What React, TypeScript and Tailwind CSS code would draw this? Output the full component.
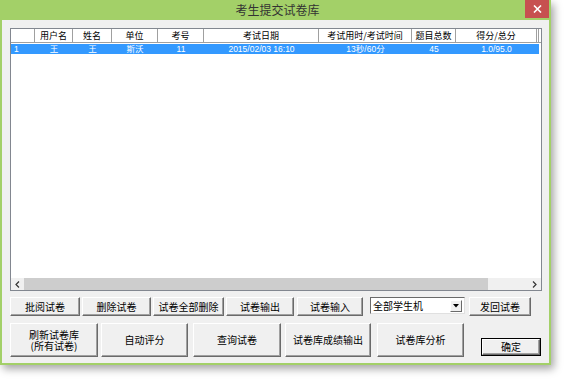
import React from "react";

const F = { fontFamily: '"Noto Sans CJK SC", "Liberation Sans", sans-serif' };
const FV = { fontFamily: '"Liberation Sans", "Noto Sans CJK SC", sans-serif' };

const cols: { w: number; label: string; val: string; align?: string }[] = [
  { w: 24, label: "", val: "1", align: "left" },
  { w: 38, label: "用户名", val: "王" },
  { w: 39, label: "姓名", val: "王" },
  { w: 46, label: "单位", val: "斯沃" },
  { w: 46, label: "考号", val: "11" },
  { w: 115, label: "考试日期", val: "2015/02/03 16:10" },
  { w: 93, label: "考试用时/考试时间", val: "13秒/60分" },
  { w: 44, label: "题目总数", val: "45" },
  { w: 81, label: "得分/总分", val: "1.0/95.0" },
];

function Btn({ className, children }: { className: string; children: React.ReactNode }) {
  return (
    <div
      className={
        "flex items-center justify-center bg-[#f0f0f0] border border-t-white border-l-white border-r-[#6a6a6a] border-b-[#6a6a6a] shadow-[inset_-1px_-1px_0_#a0a0a0] text-[10px] leading-[12px] text-black text-center whitespace-nowrap " +
        className
      }
    >
      {children}
    </div>
  );
}

export default function App() {
  return (
    <div className="w-[568px] h-[382px] bg-white overflow-hidden" style={F}>
      <div className="w-[551px] h-[365px] bg-[#a3d068] flex flex-col px-[2px] pb-[2px] shadow-[3px_4px_8px_rgba(0,0,0,0.35)]">
        <div className="h-[20px] relative flex items-center justify-center shrink-0">
          <span className="text-[12px] text-[#333] ml-[4px]">考生提交试卷库</span>
          <div className="absolute right-[0px] top-0 w-[24px] h-[18px] bg-[#c75050] flex items-center justify-center">
            <svg width="9" height="8" viewBox="0 0 9 8">
              <path d="M1 0.5 L8 7.5 M8 0.5 L1 7.5" stroke="white" strokeWidth="1.6" />
            </svg>
          </div>
        </div>
        <div className="flex-1 bg-[#f0f0f0] pl-[8px] pt-[8px] flex flex-col">
          {/* list view */}
          <div className="w-[532px] h-[263px] border border-[#828790] bg-white flex flex-col">
            <div className="h-[14px] flex border-b border-[#a0a0a0] shrink-0">
              {cols.map((c, i) => (
                <div
                  key={i}
                  style={{ width: c.w }}
                  className="h-full flex items-center justify-center border-r border-[#a0a0a0] text-[9px] leading-[11px] text-black whitespace-nowrap overflow-hidden"
                >
                  {c.label}
                </div>
              ))}
              <div className="w-[2px] h-full border-r border-[#a0a0a0]" />
            </div>
            <div className="h-[10px] mt-[1px] flex bg-[#3399ff] w-[528px] shrink-0" style={FV}>
              {cols.map((c, i) => (
                <div
                  key={i}
                  style={{ width: c.w }}
                  className={
                    "h-full flex items-center text-[8.5px] leading-[10px] text-white whitespace-nowrap overflow-hidden " +
                    (c.align === "left" ? "justify-start pl-[3px]" : "justify-center")
                  }
                >
                  {c.val}
                </div>
              ))}
            </div>
            <div className="flex-1" />
            <div className="h-[12px] flex items-stretch shrink-0">
              <div className="w-[13px] flex items-center justify-center bg-[#f0f0f0]">
                <svg width="5" height="7" viewBox="0 0 5 7">
                  <path d="M4 0.5 L1 3.5 L4 6.5" stroke="#333" strokeWidth="1.2" fill="none" />
                </svg>
              </div>
              <div className="w-[464px] bg-[#cdcdcd]" />
              <div className="flex-1 bg-[#f0f0f0]" />
              <div className="w-[13px] flex items-center justify-center bg-[#f0f0f0]">
                <svg width="5" height="7" viewBox="0 0 5 7">
                  <path d="M1 0.5 L4 3.5 L1 6.5" stroke="#333" strokeWidth="1.2" fill="none" />
                </svg>
              </div>
            </div>
          </div>
          {/* row 1 */}
          <div className="flex mt-[6px] h-[19px] items-start">
            <Btn className="w-[70px] h-[19px]">批阅试卷</Btn>
            <Btn className="w-[69px] h-[19px] ml-[2px]">删除试卷</Btn>
            <Btn className="w-[71px] h-[19px] ml-[2px]">试卷全部删除</Btn>
            <Btn className="w-[68px] h-[19px] ml-[2px]">试卷输出</Btn>
            <Btn className="w-[66px] h-[19px] ml-[3px]">试卷输入</Btn>
            <div className="w-[95px] h-[17px] ml-[7px] bg-white border border-t-[#6a6a6a] border-l-[#6a6a6a] border-r-[#e0e0e0] border-b-[#e0e0e0] flex items-center">
              <span className="flex-1 text-[10px] leading-[12px] text-black pl-[2px]">全部学生机</span>
              <div className="w-[12px] h-[12px] mr-[2px] bg-[#f0f0f0] border border-t-white border-l-white border-r-[#6a6a6a] border-b-[#6a6a6a] flex items-center justify-center">
                <svg width="6" height="4" viewBox="0 0 6 4">
                  <path d="M0 0 L6 0 L3 3.5 Z" fill="#000" />
                </svg>
              </div>
            </div>
            <Btn className="w-[62px] h-[19px] ml-[4px]">发回试卷</Btn>
          </div>
          {/* row 2 */}
          <div className="flex mt-[7px] items-end">
            <Btn className="w-[88px] h-[34px] flex-col">
              <span className="leading-[11px] block">刷新试卷库</span>
              <span className="leading-[11px] block">(所有试卷)</span>
            </Btn>
            <Btn className="w-[87px] h-[34px] ml-[3px]">自动评分</Btn>
            <Btn className="w-[88px] h-[34px] ml-[5px]">查询试卷</Btn>
            <Btn className="w-[86px] h-[34px] ml-[4px]">试卷库成绩输出</Btn>
            <Btn className="w-[87px] h-[34px] ml-[6px]">试卷库分析</Btn>
            <div className="ml-[17px] mb-[1px] w-[60px] h-[18px] border border-black flex">
              <Btn className="flex-1 h-full">确定</Btn>
            </div>
          </div>
        </div>
      </div>
    </div>
  );
}
